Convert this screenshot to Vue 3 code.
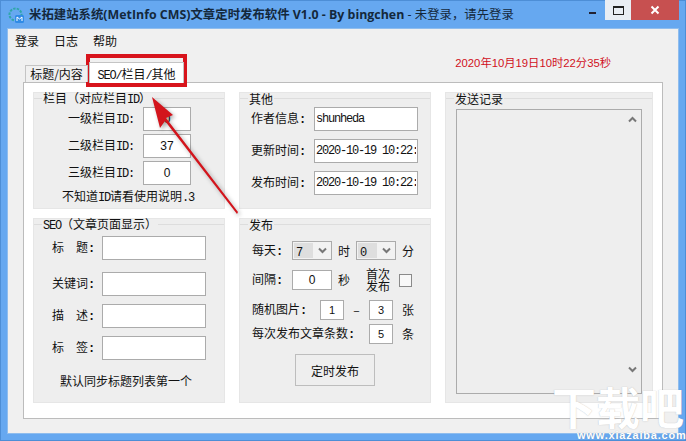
<script setup>
const catRows = [
  { name: '一级栏目', value: '0' },
  { name: '二级栏目', value: '37' },
  { name: '三级栏目', value: '0' }
]
const otherRows = [
  { name: '作者信息', value: 'shunheda' },
  { name: '更新时间', value: '2020-10-19 10:22:35' },
  { name: '发布时间', value: '2020-10-19 10:22:35' }
]
const seoRows = [
  { name: '标　题', top: 6 },
  { name: '关键词', top: 12 },
  { name: '描　述', top: 8 },
  { name: '标　签', top: 8 }
]
</script>

<template>
  <div class="window">
    <header class="titlebar">
      <svg class="app-icon" width="17" height="17" viewBox="0 0 17 17">
        <circle cx="7.5" cy="7.5" r="6" fill="none" stroke="#2fa6a8" stroke-width="2" stroke-dasharray="2.4 1.2" />
        <rect x="7" y="8" width="9" height="8" rx="1.5" fill="#2f8be6" />
        <path d="M9 14v-4l2.5 2 2.5-2v4" fill="none" stroke="#fff" stroke-width="1" />
      </svg>
      <div class="title">米拓建站系统(MetInfo CMS)文章定时发布软件 V1.0 - By bingchen<span class="title-light"> - 未登录，请先登录</span></div>
      <div class="caption-buttons">
        <div class="cap cap-min"><i></i></div>
        <div class="cap cap-max"><i></i></div>
        <div class="cap cap-close">
          <svg width="10" height="10" viewBox="0 0 10 10"><path d="M1.5 1.5l7 7M8.5 1.5l-7 7" stroke="#fff" stroke-width="2" /></svg>
        </div>
      </div>
    </header>

    <div class="client">
      <nav class="menu">
        <span>登录</span><span>日志</span><span>帮助</span>
      </nav>

      <div class="tabrow">
        <div class="tab">标题/内容</div>
        <div class="tab tab-active"><span class="lat">SEO/</span>栏目<span class="lat">/</span>其他</div>
        <div class="clock">2020年10月19日10时22分35秒</div>
      </div>

      <main class="panel">
        <section class="group g-cat">
          <div class="legend"><span>栏目（对应栏目<span class="lat">ID</span>）</span></div>
          <div v-for="r in catRows" :key="r.name" class="row cat-row">
            <label class="cat-label">{{ r.name }}<span class="lat">ID:</span></label>
            <input class="box center cat-input" :value="r.value" readonly />
          </div>
          <p class="cat-hint">不知道<span class="lat">ID</span>请看使用说明<span class="lat">.3</span></p>
        </section>

        <section class="group g-other">
          <div class="legend"><span>其他</span></div>
          <div v-for="r in otherRows" :key="r.name" class="row other-row">
            <label class="other-label">{{ r.name }}<span class="lat strong">:</span></label>
            <input class="box other-input" :value="r.value" readonly />
          </div>
        </section>

        <section class="group g-log">
          <div class="legend"><span>发送记录</span></div>
          <div class="logbox">
            <div class="scroll">
              <svg width="9" height="7" viewBox="0 0 9 7"><path d="M1 5.5l3.5-3.5 3.5 3.5" fill="none" stroke="#777" stroke-width="2" /></svg>
              <svg width="9" height="7" viewBox="0 0 9 7"><path d="M1 1.5l3.5 3.5 3.5-3.5" fill="none" stroke="#777" stroke-width="2" /></svg>
            </div>
          </div>
        </section>

        <section class="group g-seo">
          <div class="legend"><span><span class="lat">SEO</span>（文章页面显示）</span></div>
          <div v-for="r in seoRows" :key="r.name" class="row seo-row" :style="{ marginTop: r.top + 'px' }">
            <label class="seo-label">{{ r.name }}<span class="lat strong">:</span></label>
            <input class="box seo-input" readonly />
          </div>
          <p class="seo-hint">默认同步标题列表第一个</p>
        </section>

        <section class="group g-pub">
          <div class="legend"><span>发布</span></div>
          <div class="row pub-1">
            <label class="w40">每天<span class="lat strong">:</span></label>
            <div class="select"><b><span class="lat">7</span></b><svg width="9" height="7" viewBox="0 0 9 7"><path d="M1 1.5l3.5 3.5 3.5-3.5" fill="none" stroke="#777" stroke-width="2" /></svg></div>
            <span class="unit">时</span>
            <div class="select"><b><span class="lat">0</span></b><svg width="9" height="7" viewBox="0 0 9 7"><path d="M1 1.5l3.5 3.5 3.5-3.5" fill="none" stroke="#777" stroke-width="2" /></svg></div>
            <span class="unit">分</span>
          </div>
          <div class="row pub-2">
            <label class="w40">间隔<span class="lat strong">:</span></label>
            <input class="box center w-int" value="0" readonly />
            <span class="unit">秒</span>
            <span class="first">首次<br />发布</span>
            <span class="check"></span>
          </div>
          <div class="row pub-3">
            <label class="w68">随机图片<span class="lat strong">:</span></label>
            <input class="box center w-small" value="1" readonly />
            <span class="dash">–</span>
            <input class="box center w-small" value="3" readonly />
            <span class="unit-far">张</span>
          </div>
          <div class="row pub-4">
            <label class="w117">每次发布文章条数<span class="lat strong">:</span></label>
            <input class="box center w-small" value="5" readonly />
            <span class="unit-far">条</span>
          </div>
          <button class="pub-button" type="button">定时发布</button>
        </section>
      </main>
    </div>

    <div class="callout"></div>
    <svg class="arrow" width="686" height="441" viewBox="0 0 686 441">
      <path d="M238 212L166 118l7-3-21-18 8 31 5-7 72 93z" fill="#d3141c" />
    </svg>
    <div class="watermark">
      <div class="wm-big">下载吧</div>
      <div class="wm-url">www.xiazaiba.com</div>
    </div>
  </div>
</template>

<style scoped>
.window {
  position: relative;
  width: 686px;
  height: 441px;
  box-sizing: border-box;
  padding: 0 8px 8px;
  background: #66a8f0;
  box-shadow: inset 0 0 0 1px #4d8ed6;
  display: flex;
  flex-direction: column;
  overflow: hidden;
  font-family: "Noto Sans CJK SC", sans-serif;
  font-size: 12px;
  line-height: 14px;
  color: #111;
}
.titlebar {
  height: 29px;
  flex: none;
  display: flex;
  align-items: center;
}
.app-icon { flex: none; margin-top: 2px; }
.title {
  margin-left: 4px;
  margin-top: 1px;
  white-space: nowrap;
  font-family: "Open Sans", "Noto Sans CJK SC", sans-serif;
  font-weight: 700;
  font-size: 12.4px;
  color: #14283c;
}
.title-light { font-weight: 400; }
.caption-buttons {
  margin-left: auto;
  margin-right: -1px;
  align-self: flex-start;
  display: flex;
  height: 20px;
}
.cap { height: 20px; display: flex; align-items: center; justify-content: center; }
.cap-min { width: 26px; }
.cap-min i { width: 7px; height: 2px; margin-top: 6px; background: #223; }
.cap-max { width: 26px; background: #e9eef4; }
.cap-max i { width: 9px; height: 6px; border: 1px solid #222; border-top-width: 2px; }
.cap-close { width: 48px; background: #c75050; }

.client {
  flex: 1;
  min-height: 0;
  background: #f0f0f0;
  box-shadow: 0 0 0 1px #8fbdee;
}
.menu {
  height: 23px;
  padding-left: 7px;
  display: flex;
  align-items: center;
  gap: 15px;
}
.tabrow {
  height: 30px;
  padding-left: 17px;
  display: flex;
  align-items: flex-end;
  position: relative;
  z-index: 1;
}
.tab {
  height: 17px;
  width: 63px;
  box-sizing: border-box;
  border: 1px solid #c4c4c4;
  border-bottom: 0;
  background: #f0f0f0;
  text-align: center;
  line-height: 15px;
  white-space: nowrap;
}
.tab-active {
  height: 21px;
  width: 95px;
  margin-left: 1px;
  margin-bottom: -1px;
  background: #fff;
  line-height: 21px;
}
.lat {
  font-family: "Liberation Mono", monospace;
  font-size: 12px;
  letter-spacing: -1.2px;
}
.strong { font-weight: 700; }
.clock {
  align-self: flex-start;
  margin-left: auto;
  margin-right: 67px;
  margin-top: 4px;
  white-space: nowrap;
  font-family: "Liberation Sans", "Noto Sans CJK SC", sans-serif;
  font-size: 11.3px;
  color: #d0101c;
}
.panel {
  margin-left: 15px;
  width: 640px;
  height: 337px;
  box-sizing: border-box;
  border: 1px solid #bcbcbc;
  background: #fff;
  padding: 9px 0 0 9px;
  display: grid;
  grid-template-columns: 192px 192px 208px;
  grid-template-rows: 117px 185px;
  column-gap: 14px;
  row-gap: 9px;
}
.group {
  box-sizing: border-box;
  border: 1px solid #e6e6e6;
  background: #eeeeee;
  display: flex;
  flex-direction: column;
}
.g-log { grid-column: 3; grid-row: 1 / span 2; }
.g-cat { grid-column: 1; grid-row: 1; }
.g-other { grid-column: 2; grid-row: 1; }
.g-seo { grid-column: 1; grid-row: 2; }
.g-pub { grid-column: 2; grid-row: 2; }
.legend {
  height: 11px;
  flex: none;
  display: flex;
  align-items: center;
  white-space: nowrap;
  gap: 1px;
}
.legend::before { content: ""; width: 8px; height: 1px; background: #dddddd; }
.legend::after { content: ""; flex: 1; height: 1px; background: #dddddd; }
.row { display: flex; align-items: center; flex: none; }
label { white-space: nowrap; flex: none; }
.box {
  box-sizing: border-box;
  border: 1px solid #ababab;
  background: #fff;
  outline: none;
  margin: 0;
  padding: 0 1px;
  height: 24px;
  font-family: "Liberation Mono", monospace;
  font-size: 12px;
  letter-spacing: -1.2px;
  color: #111;
  flex: none;
}
.center { text-align: center; }

.cat-row { height: 24px; padding-left: 34px; margin-top: 3px; }
.cat-label { width: 75px; }
.cat-input { width: 48px; font-family: "Liberation Sans", sans-serif; font-size: 12px; letter-spacing: 0; }
.cat-hint { margin: 4px 0 0 28px; height: 14px; white-space: nowrap; }

.other-row { height: 24px; padding-left: 11px; margin-top: 8px; }
.other-row:nth-child(2) { margin-top: 3px; }
.other-label { width: 63px; }
.other-input { width: 104px; }

.logbox {
  width: 186px;
  height: 285px;
  margin: 5px 0 0 10px;
  box-sizing: border-box;
  border: 1px solid #ababab;
  background: #eeeeee;
  display: flex;
  justify-content: flex-end;
  padding: 6px 4px 0 0;
}
.scroll {
  height: 257px;
  display: flex;
  flex-direction: column;
  justify-content: space-between;
}
.scroll svg { display: block; }

.seo-row { height: 24px; padding-left: 18px; }
.seo-label { width: 50px; }
.seo-input { width: 104px; }
.seo-hint { margin: 14px 0 0 26px; height: 14px; white-space: nowrap; }

.g-pub .row { padding-left: 12px; }
.pub-1 { margin-top: 11px; height: 19px; }
.pub-2 { margin-top: 10px; height: 20px; }
.pub-3 { margin-top: 10px; height: 20px; }
.pub-4 { margin-top: 4px; height: 20px; }
.w40 { width: 40px; }
.w68 { width: 68px; }
.w117 { width: 117px; }
.select {
  width: 40px;
  height: 19px;
  box-sizing: border-box;
  border: 1px solid #ababab;
  background: #f2f2f2;
  display: flex;
  align-items: center;
  padding: 1px 4px 1px 1px;
  flex: none;
}
.select b {
  font-weight: 400;
  width: 19px;
  height: 100%;
  background: #dedede;
  padding-left: 2px;
  box-sizing: border-box;
  line-height: 15px;
}
.select svg { margin-left: auto; }
.unit { width: 12px; margin: 0 6px; flex: none; }
.w-int { width: 40px; height: 20px; font-family: "Liberation Sans", sans-serif; font-size: 12px; letter-spacing: 0; }
.w-small { width: 24px; height: 20px; font-family: "Liberation Sans", sans-serif; font-size: 11px; letter-spacing: 0; }
.first { width: 24px; margin-left: 10px; line-height: 12px; white-space: nowrap; flex: none; }
.check {
  width: 13px;
  height: 13px;
  margin-left: 9px;
  box-sizing: border-box;
  border: 1px solid #8a8a8a;
  background: #f8f8f8;
  flex: none;
}
.dash { width: 25px; text-align: center; flex: none; }
.unit-far { width: 12px; margin-left: 9px; flex: none; }
.pub-button {
  margin: 10px 0 0 55px;
  width: 80px;
  height: 32px;
  flex: none;
  box-sizing: border-box;
  border: 1px solid #bdbdbd;
  background: #eeeeee;
  font-family: "Noto Sans CJK SC", sans-serif;
  font-size: 12px;
  color: #111;
  padding: 0;
}

.callout {
  position: absolute;
  left: 86px;
  top: 54px;
  width: 101px;
  height: 33px;
  box-sizing: border-box;
  border: 4px solid #d8141c;
}
.arrow {
  position: absolute;
  left: 0;
  top: 0;
  pointer-events: none;
  filter: drop-shadow(2px 2px 2px rgba(0, 0, 0, 0.35));
}
.watermark {
  position: absolute;
  left: 552px;
  top: 383px;
  width: 134px;
  color: #fff;
  text-shadow: 0 0 1px rgba(120, 120, 120, 0.5);
}
.wm-big {
  font-size: 44px;
  line-height: 46px;
  font-weight: 700;
  white-space: nowrap;
}
.wm-url {
  margin-left: 25px;
  font-family: "Liberation Sans", sans-serif;
  font-size: 11px;
  font-weight: 700;
  letter-spacing: 0.8px;
  line-height: 12px;
  white-space: nowrap;
}
</style>
